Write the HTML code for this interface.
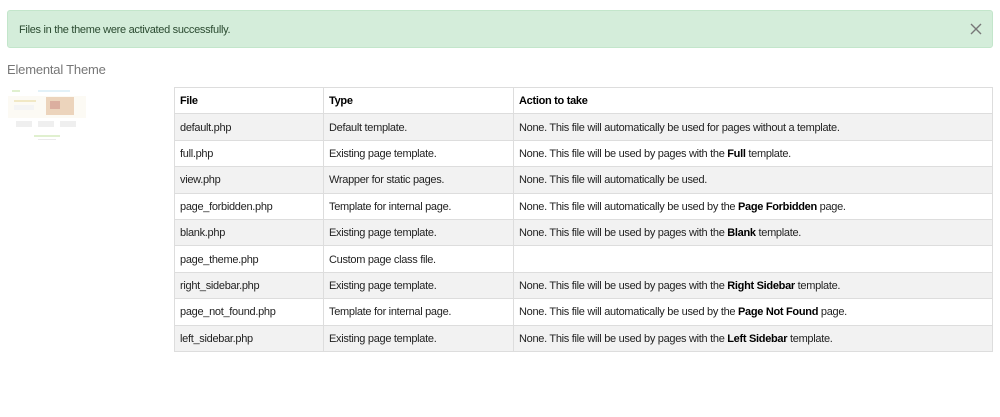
<!DOCTYPE html>
<html><head><style>
body{margin:0;width:1000px;height:417px;background:#fff;font-family:"Liberation Sans",sans-serif;font-size:11px;letter-spacing:-0.3px;color:#222;position:relative;overflow:hidden}
.alert{position:absolute;left:7px;top:10px;width:984px;height:36px;background:#d4edda;border:1px solid #c3e6cb;border-radius:3px;color:#2a4a30}
.alert span{position:absolute;left:11px;top:13px;font-size:11px}
.alert svg{position:absolute;right:10px;top:12px}
h3{position:absolute;left:7px;top:62px;margin:0;font-weight:normal;font-size:13px;letter-spacing:-0.2px;color:#777}
.thumb{position:absolute;left:8px;top:88px;width:78px;height:58px;opacity:.6}
table{position:absolute;left:174px;top:87px;width:819px;border-collapse:collapse}
td,th{border:1px solid #ddd;height:24.4px;padding:1px 5px 0;text-align:left;vertical-align:middle;font-size:11px}
th{font-weight:bold;color:#000}
tr:nth-child(even) td{background:#f2f2f2}
td:nth-child(1),th:nth-child(1){width:138px}
td:nth-child(2),th:nth-child(2){width:179px}
b{color:#000}
</style></head><body>
<div class="alert"><span>Files in the theme were activated successfully.</span>
<svg width="12" height="12" viewBox="0 0 12 12"><path d="M1 1L11 11M11 1L1 11" stroke="#777" stroke-width="1.4"/></svg></div>
<h3>Elemental Theme</h3>
<svg class="thumb" viewBox="0 0 78 58">
<rect x="0" y="0" width="78" height="58" fill="#fff"/>
<rect x="4" y="2" width="8" height="2" fill="#cde7b0"/>
<rect x="30" y="2" width="32" height="2" fill="#cfe8f5"/>
<rect x="0" y="8" width="78" height="22" fill="#fbf8ee"/>
<rect x="6" y="12" width="22" height="2" fill="#e8d9a0"/>
<rect x="6" y="17" width="20" height="5" fill="#eee"/>
<rect x="38" y="9" width="28" height="18" fill="#e0b890"/>
<rect x="42" y="13" width="10" height="8" fill="#c47a60"/>
<rect x="8" y="33" width="16" height="6" fill="#e6e6e6"/>
<rect x="30" y="33" width="16" height="6" fill="#e6e6e6"/>
<rect x="52" y="33" width="16" height="6" fill="#e6e6e6"/>
<rect x="26" y="47" width="26" height="2" fill="#cde7b0"/>
<rect x="30" y="51" width="18" height="1" fill="#ddd"/>
</svg>
<table>
<tr><th>File</th><th>Type</th><th>Action to take</th></tr>
<tr><td>default.php</td><td>Default template.</td><td>None. This file will automatically be used for pages without a template.</td></tr>
<tr><td>full.php</td><td>Existing page template.</td><td>None. This file will be used by pages with the <b>Full</b> template.</td></tr>
<tr><td>view.php</td><td>Wrapper for static pages.</td><td>None. This file will automatically be used.</td></tr>
<tr><td>page_forbidden.php</td><td>Template for internal page.</td><td>None. This file will automatically be used by the <b>Page Forbidden</b> page.</td></tr>
<tr><td>blank.php</td><td>Existing page template.</td><td>None. This file will be used by pages with the <b>Blank</b> template.</td></tr>
<tr><td>page_theme.php</td><td>Custom page class file.</td><td></td></tr>
<tr><td>right_sidebar.php</td><td>Existing page template.</td><td>None. This file will be used by pages with the <b>Right Sidebar</b> template.</td></tr>
<tr><td>page_not_found.php</td><td>Template for internal page.</td><td>None. This file will automatically be used by the <b>Page Not Found</b> page.</td></tr>
<tr><td>left_sidebar.php</td><td>Existing page template.</td><td>None. This file will be used by pages with the <b>Left Sidebar</b> template.</td></tr>
</table>
</body></html>
